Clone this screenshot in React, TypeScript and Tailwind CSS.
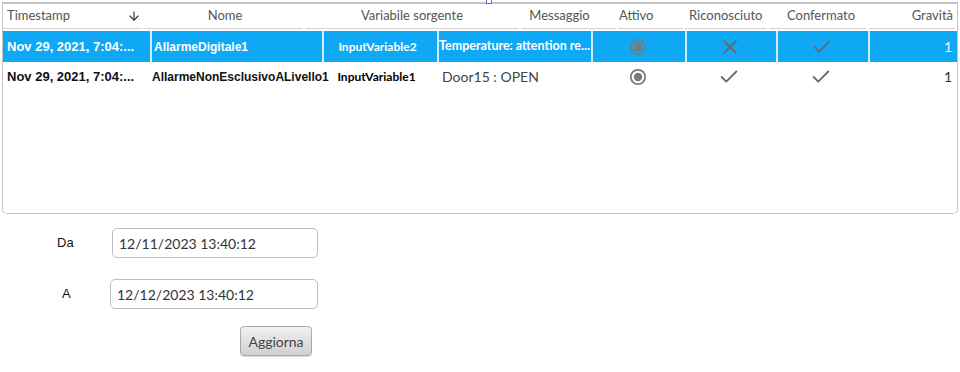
import { ArrowDown, Check, X } from 'lucide-react'

const headers = [
  { label: 'Timestamp', w: 'w-[140px]', align: 'justify-start pl-1', arrow: true },
  { label: 'Nome', w: 'w-[162px]', align: 'justify-center pl-[4px]' },
  { label: 'Variabile sorgente', w: 'w-[216px]', align: 'justify-center' },
  { label: 'Messaggio', w: 'w-[97px]', align: 'justify-center pr-[18px]' },
  { label: 'Attivo', w: 'w-[67px]', align: 'justify-start pl-[1px]' },
  { label: 'Riconosciuto', w: 'w-[84px]', align: 'justify-start pl-[4px]' },
  { label: 'Confermato', w: 'w-[100px]', align: 'justify-center pl-[6px]' },
  { label: 'Gravità', w: 'flex-1', align: 'justify-end pr-[2px]' },
]

const cols = 'grid grid-cols-[147px_172px_115px_156px_92px_91px_92px_1fr]'

function Radio() {
  return (
    <svg width="18" height="18" viewBox="0 0 18 18">
      <circle cx="9" cy="9" r="7.2" fill="none" stroke="#7a7a7a" strokeWidth="1.8" />
      <circle cx="9" cy="9" r="4.2" fill="#7a7a7a" />
    </svg>
  )
}

const rows = [
  {
    selected: true,
    ts: 'Nov 29, 2021, 7:04:...',
    name: 'AllarmeDigitale1',
    source: 'InputVariable2',
    msg: 'Temperature: attention re...',
    ack: false,
  },
  {
    selected: false,
    ts: 'Nov 29, 2021, 7:04:...',
    name: 'AllarmeNonEsclusivoALivello1',
    source: 'InputVariable1',
    msg: 'Door15 : OPEN',
    ack: true,
  },
]

export default function App() {
  return (
    <div className="w-[960px] h-[372px] bg-white relative font-['Lato',sans-serif]">
      {/* resize handle */}
      <div className="absolute left-[486px] top-[-3px] w-[6px] h-[7px] border border-[#4a78c0] bg-white z-10" />

      <div className="pt-[2px] px-[2px]">
        <div className="h-[212px] border-x border-b border-t-2 border-[#c4c4c4] rounded-b-[5px] overflow-hidden">
          {/* header */}
          <div className="flex h-[25px] text-[13px] text-[#555]">
            {headers.map((h) => (
              <div key={h.label} className={`${h.w} pr-[2px]`}>
                <div className={`h-full flex items-center border-b border-[#d0d0d0] ${h.align}`}>
                  <span>{h.label}</span>
                  {h.arrow && <ArrowDown size={14} strokeWidth={2} color="#333" className="ml-auto mr-0" />}
                </div>
              </div>
            ))}
          </div>

          <div className="mt-[2px]">
            {rows.map((r, i) => (
              <div
                key={i}
                className={`${cols} ${r.selected ? 'h-[31px] bg-[#0fa8f5] text-white' : 'h-[29px] text-[#111]'}`}
              >
                <div className="flex items-center pl-[4px] font-['Liberation_Sans',sans-serif] font-bold text-[13px] whitespace-nowrap">
                  {r.ts}
                </div>
                <div className={`flex items-center pl-[2px] font-['Liberation_Sans',sans-serif] font-bold text-[12px] whitespace-nowrap ${r.selected ? 'border-l-2 border-white/80' : ''}`}>
                  {r.name}
                </div>
                <div className={`flex items-center justify-center pr-[6px] font-bold text-[12px] ${r.selected ? 'border-l-2 border-white/80' : 'text-black'}`}>
                  {r.source}
                </div>
                <div className={`flex items-center whitespace-nowrap ${r.selected ? 'border-x-2 border-white/80 font-bold text-[12.5px]' : 'pl-[5px] text-[14px] text-[#444]'}`}>
                  {r.msg}
                </div>
                <div className="flex items-center justify-center pr-[2px]">
                  <Radio />
                </div>
                <div className={`flex items-center justify-center pr-[4px] ${r.selected ? 'border-l-2 border-white/80' : ''}`}>
                  {r.ack ? (
                    <Check size={22} strokeWidth={2} color="#6a6a6a" />
                  ) : (
                    <X size={24} strokeWidth={1.8} color="#6a6a6a" />
                  )}
                </div>
                <div className={`flex items-center justify-center pr-[2px] ${r.selected ? 'border-l-2 border-white/80' : ''}`}>
                  <Check size={22} strokeWidth={2} color="#6a6a6a" />
                </div>
                <div className={`flex items-center justify-end pr-[5px] text-[14px] ${r.selected ? 'border-l-2 border-white/80 text-[#e8f6ff]' : 'text-[#333]'}`}>
                  1
                </div>
              </div>
            ))}
          </div>
        </div>
      </div>

      {/* filters */}
      <div className="mt-[14px] flex flex-col">
        <div className="flex items-center h-[30px]">
          <span className="w-[112px] pl-[57px] text-[13px] text-[#111] font-['Liberation_Sans',sans-serif]">Da</span>
          <div className="w-[206px] h-[30px] border border-[#bdbdbd] rounded-[5px] flex items-center pl-[6px] text-[14px] text-[#333]">
            12/11/2023 13:40:12
          </div>
        </div>
        <div className="flex items-center h-[30px] mt-[21px]">
          <span className="w-[110px] pl-[62px] text-[13px] text-[#111] font-['Liberation_Sans',sans-serif]">A</span>
          <div className="w-[208px] h-[30px] border border-[#bdbdbd] rounded-[5px] flex items-center pl-[6px] text-[14px] text-[#333]">
            12/12/2023 13:40:12
          </div>
        </div>
        <div className="mt-[17px] pl-[240px]">
          <button className="w-[72px] h-[30px] rounded-[4px] border border-[#a9a9a9] bg-gradient-to-b from-[#f2f2f2] to-[#cfcfcf] text-[14px] text-[#444] shadow-[0_1px_1px_rgba(0,0,0,0.15)]">
            Aggiorna
          </button>
        </div>
      </div>
    </div>
  )
}
